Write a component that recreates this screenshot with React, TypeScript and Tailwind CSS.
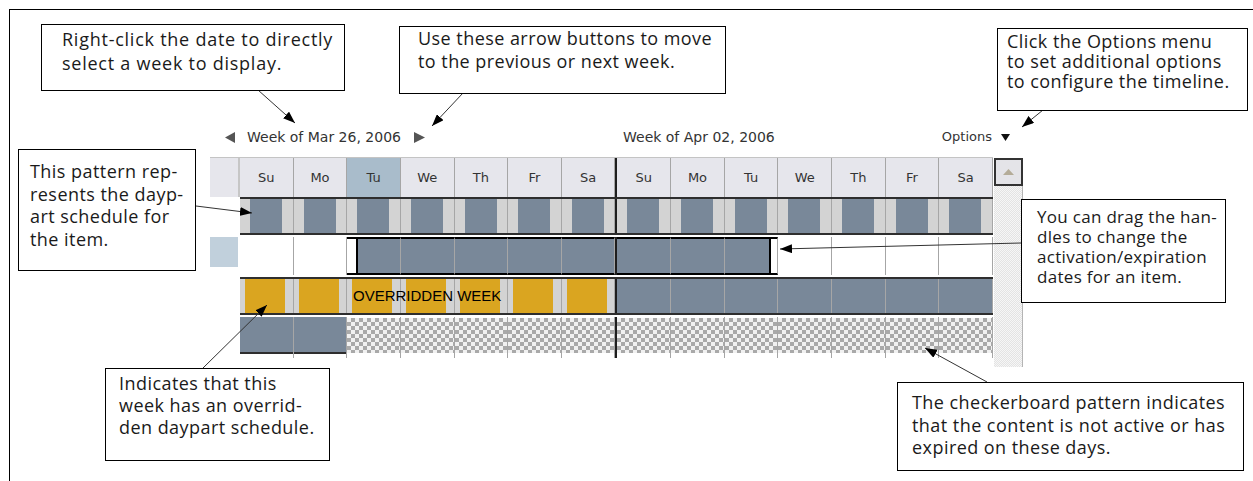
import type { ReactNode } from 'react';

const days = ['Su', 'Mo', 'Tu', 'We', 'Th', 'Fr', 'Sa'];
const cols = 'grid w-[753px] grid-cols-[repeat(7,minmax(0,1fr))_2px_repeat(7,minmax(0,1fr))]';
const divider = 'border-r border-r-[#a6a6a6]';
const checker =
  'bg-[image:conic-gradient(#a9a9a9_25%,#f1f1f1_0_50%,#a9a9a9_0_75%,#f1f1f1_0)] bg-[length:8px_8px]';

function Sep() {
  return <div className="bg-[#1e1e1e]" />;
}

// 14 cells with the thick week separator in between
function weeks(render: (week: number, day: number) => ReactNode) {
  const out: ReactNode[] = [];
  for (let w = 0; w < 2; w++) {
    if (w === 1) out.push(<Sep key="sep" />);
    for (let d = 0; d < 7; d++) out.push(<div key={`${w}-${d}`} className="contents">{render(w, d)}</div>);
  }
  return out;
}

function Callout({ className, text = 'text-[18px] tracking-[0.45px]', lines }: { className: string; text?: string; lines: string[] }) {
  return (
    <div className={`absolute border border-black bg-white whitespace-nowrap ${text} ${className}`}>
      {lines.map((l) => (
        <div key={l}>{l}</div>
      ))}
    </div>
  );
}

function Timeline() {
  return (
    <div className="ml-[200px] mt-[117px] w-[813px] font-['DejaVu_Sans',sans-serif] text-[13px] text-[#333]">
      {/* week navigation */}
      <div className="flex items-center h-[20px] text-[14px]">
        <div className="flex items-center w-[413px] pl-[15px]">
          <svg width="10" height="11" viewBox="0 0 10 11">
            <path d="M10 0 L0 5.5 L10 11 Z" fill="#555" />
          </svg>
          <span className="ml-[12px]">Week of Mar 26, 2006</span>
          <svg width="11" height="11" viewBox="0 0 11 11" className="ml-[13px]">
            <path d="M0 0 L11 5.5 L0 11 Z" fill="#555" />
          </svg>
        </div>
        <span>Week of Apr 02, 2006</span>
        <div className="ml-auto mr-[13px] flex items-center text-[13px]">
          Options
          <svg width="9" height="7" viewBox="0 0 9 7" className="ml-[9px]">
            <path d="M0 0 L9 0 L4.5 7 Z" fill="#111" />
          </svg>
        </div>
      </div>

      <div className="flex mt-[10px]">
        <div className="w-[783px]">
          {/* header */}
          <div className="flex h-[40px] border-t border-[#c4c4c4]">
            <div className="w-[28px] bg-[#e6e6ec]" />
            <div className="w-[2px] bg-[#c6c6c6]" />
            <div className={cols}>
              {weeks((w, d) => (
                <div
                  className={`flex items-center justify-center ${divider} ${
                    w === 0 && d === 2 ? 'bg-[#a9bccb]' : 'bg-[#e6e6ec]'
                  }`}
                >
                  {days[d]}
                </div>
              ))}
            </div>
          </div>

          {/* daypart pattern */}
          <div className="flex h-[38px]">
            <div className="w-[30px]" />
            <div className={`${cols} border-y-2 border-[#2e2e2e]`}>
              {weeks(() => (
                <div className={`flex ${divider}`}>
                  <div className="w-[10px] bg-[#d3d3d3]" />
                  <div className="w-[32px] bg-[#798899]" />
                  <div className="flex-1 bg-[#d3d3d3]" />
                </div>
              ))}
            </div>
          </div>

          {/* activation / expiration */}
          <div className="flex h-[38px] mt-[2px]">
            <div className="w-[30px]">
              <div className="w-[28px] h-[30px] bg-[#c1d0dc]" />
            </div>
            <div className={cols}>
              {weeks((w, d) => {
                const i = w * 7 + d;
                if (i === 2)
                  return (
                    <div className={`flex ${divider} border-y-2 border-y-black`}>
                      <div className="w-[9px] bg-white" />
                      <div className="flex-1 bg-[#798899] border-l-2 border-black" />
                    </div>
                  );
                if (i === 9)
                  return (
                    <div className={`flex ${divider} border-y-2 border-y-black`}>
                      <div className="flex-1 bg-[#798899] border-r-2 border-black" />
                      <div className="w-[6px] bg-white" />
                    </div>
                  );
                if (i > 2 && i < 9) return <div className={`${divider} border-y-2 border-y-black bg-[#798899]`} />;
                return <div className={divider} />;
              })}
            </div>
          </div>

          {/* overridden week */}
          <div className="flex h-[38px] mt-[2px]">
            <div className="w-[30px]" />
            <div className={`${cols} relative border-y-2 border-[#2e2e2e]`}>
              {weeks((w) =>
                w === 0 ? (
                  <div className={`flex ${divider}`}>
                    <div className="w-[5px] bg-[#d3d3d3]" />
                    <div className="w-[40px] bg-[#daa520]" />
                    <div className="flex-1 bg-[#d3d3d3]" />
                  </div>
                ) : (
                  <div className={`${divider} bg-[#798899]`} />
                )
              )}
              <span className="absolute left-[113px] top-0 h-full flex items-center font-['Liberation_Sans',sans-serif] text-[15px] text-black">
                OVERRIDDEN WEEK
              </span>
            </div>
          </div>

          {/* inactive days */}
          <div className="flex h-[41px] mt-[2px]">
            <div className="w-[30px]" />
            <div className={cols}>
              {weeks((w, d) =>
                w === 0 && d < 2 ? (
                  <div className={divider}>
                    <div className="h-[37px] bg-[#798899] border-b-2 border-[#2e2e2e]" />
                  </div>
                ) : (
                  <div className={divider}>
                    <div className={`h-[35px] mt-[1px] ${checker}`} />
                  </div>
                )
              )}
            </div>
          </div>
        </div>

        {/* scrollbar */}
        <div className="ml-[1px] w-[29px] flex flex-col">
          <div className="mt-[1px] h-[28px] border-2 border-[#333] bg-[#e4e4e8] flex items-center justify-center">
            <svg width="11" height="6" viewBox="0 0 11 6">
              <path d="M0 6 L5.5 0 L11 6 Z" fill="#b4ac98" />
            </svg>
          </div>
          <div className="h-[181px] border-r border-[#b4b4b4] bg-[image:conic-gradient(#e3e3e3_25%,#f6f6f6_0_50%,#e3e3e3_0_75%,#f6f6f6_0)] bg-[length:2px_2px]" />
        </div>
      </div>
    </div>
  );
}

const arrows: [number, number, number, number][] = [
  [258, 90, 295, 123],
  [463, 93, 432, 126],
  [1043, 110, 1022, 127],
  [196, 206, 252, 213],
  [1021, 243, 780, 249],
  [203, 368, 267, 305],
  [987, 382, 925, 348],
];

function Arrows() {
  return (
    <svg className="absolute left-0 top-0 pointer-events-none" width="1253" height="481">
      <defs>
        <marker id="ah" viewBox="0 0 12 9" refX="12" refY="4.5" markerWidth="12" markerHeight="9" markerUnits="userSpaceOnUse" orient="auto">
          <path d="M0 0 L12 4.5 L0 9 Z" fill="#000" />
        </marker>
      </defs>
      {arrows.map(([x1, y1, x2, y2]) => (
        <line key={`${x1}-${y1}`} x1={x1} y1={y1} x2={x2} y2={y2} stroke="#333" strokeWidth="1" markerEnd="url(#ah)" />
      ))}
    </svg>
  );
}

export default function App() {
  return (
    <div className="relative w-[1253px] h-[481px] overflow-hidden bg-white pl-[9px] pt-[9px] font-['Open_Sans',sans-serif] text-[#1a1a1a]">
      <div className="h-full border-l border-t border-black">
        <Timeline />
      </div>
      <Arrows />

      <Callout
        className="left-[41px] top-[24px] w-[304px] h-[67px] pl-[20px] pt-[2px] leading-[24px]"
        text="text-[18px] tracking-[0.75px]"
        lines={['Right-click the date to directly', 'select a week to display.']}
      />
      <Callout
        className="left-[399px] top-[26px] w-[327px] h-[68px] pl-[18px] leading-[23px]"
        lines={['Use these arrow buttons to move', 'to the previous or next week.']}
      />
      <Callout
        className="left-[997px] top-[28px] w-[251px] h-[83px] pl-[9px] pt-[2px] leading-[20px]"
        lines={['Click the Options menu', 'to set additional options', 'to configure the timeline.']}
      />
      <Callout
        className="left-[18px] top-[149px] w-[178px] h-[122px] pl-[11px] pt-[10px] leading-[22.5px]"
        lines={['This pattern rep-', 'resents the dayp-', 'art schedule for', 'the item.']}
      />
      <Callout
        className="left-[1021px] top-[199px] w-[205px] h-[104px] pl-[15px] pt-[7px] leading-[20px]"
        text="text-[17px] tracking-[0.3px]"
        lines={['You can drag the han-', 'dles to change the', 'activation/expiration', 'dates for an item.']}
      />
      <Callout
        className="left-[105px] top-[368px] w-[225px] h-[93px] pl-[13px] pt-[3px] leading-[22px]"
        lines={['Indicates that this', 'week has an overrid-', 'den daypart schedule.']}
      />
      <Callout
        className="left-[897px] top-[382px] w-[347px] h-[89px] pl-[14px] pt-[8px] leading-[22.5px]"
        lines={['The checkerboard pattern indicates', 'that the content is not active or has', 'expired on these days.']}
      />
    </div>
  );
}
